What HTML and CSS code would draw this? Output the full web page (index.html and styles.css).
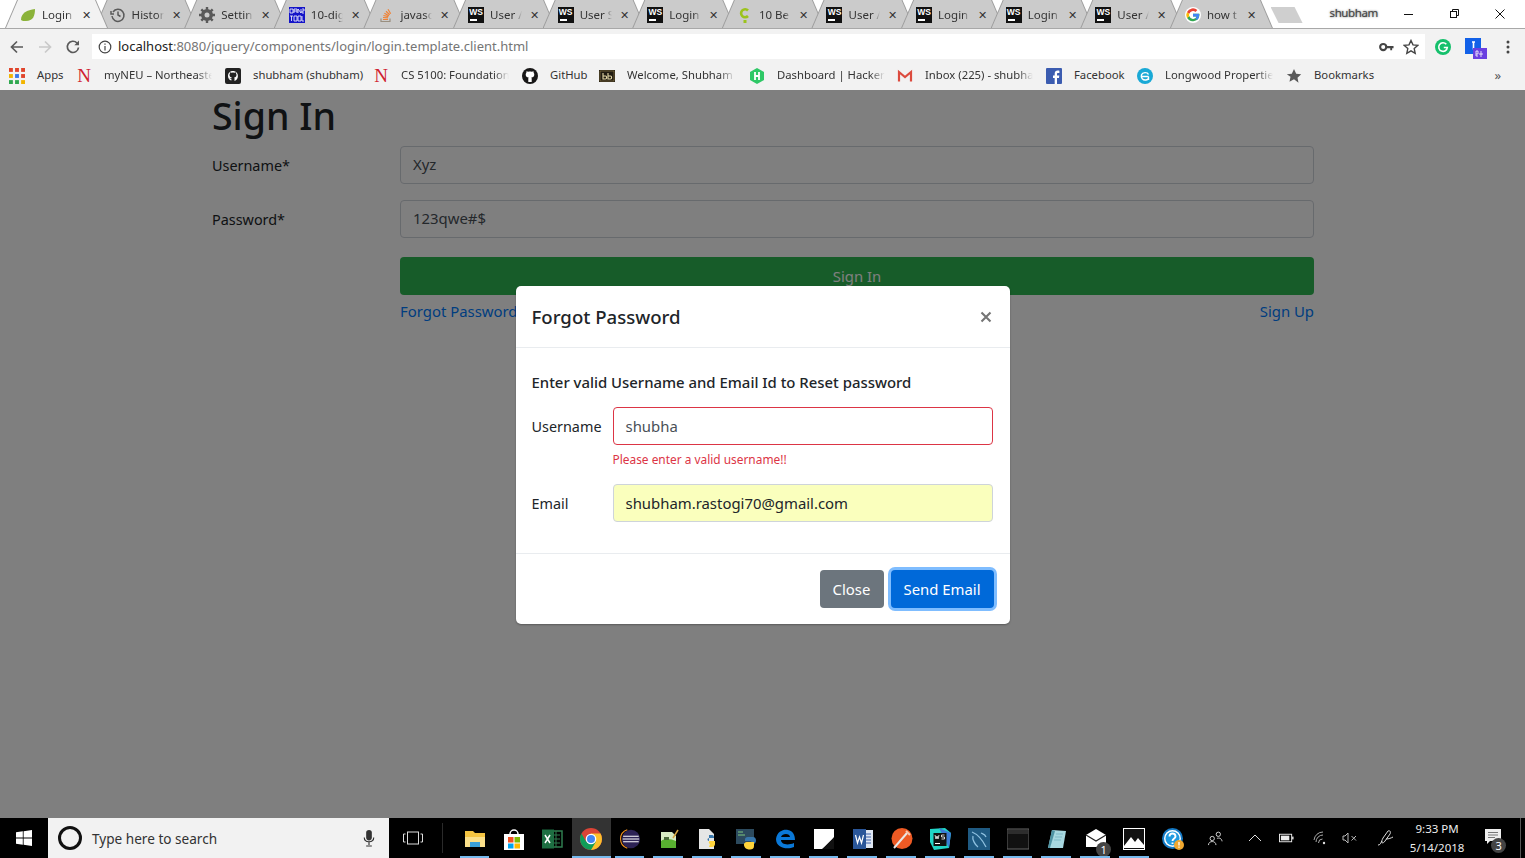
FILE: index.html
```html
<!DOCTYPE html>
<html lang="en">
  <head>
    <meta charset="UTF-8" />
    <title>Login</title>
    <link rel="stylesheet" href="styles.css">
  </head>
  <body>
    <header class="browser">
      <div class="tabstrip">
        <div class="tabs">
          <div class="tab active">
            <svg class="ico" viewBox="0 0 16 16"><path d="M1 13C1 6 7 3 15 2c0 7-2 12-9 12-2 0-4 0-5-1z" fill="#8bb33a" /></svg>
            <span class="tab-name">Login</span><span class="tab-x">✕</span>
          </div>
          <div class="tab">
            <svg class="ico" viewBox="0 0 16 16" fill="none" stroke="#5a5a5a" stroke-width="1.5"><path d="M3 5a6 6 0 1 1-1 4" /><path d="M1 4v3h3" /><path d="M8 4.500V8l2.500 1.500" /></svg>
            <span class="tab-name">Histor</span><span class="tab-x">✕</span>
          </div>
          <div class="tab">
            <svg class="ico" viewBox="0 0 16 16"><circle cx="8" cy="8" r="4.500" fill="none" stroke="#5a5a5a" stroke-width="3" /><path d="M8 0v16M0 8h16M2.300 2.300l11.400 11.400M13.700 2.300L2.300 13.700" stroke="#5a5a5a" stroke-width="2.400" /><circle cx="8" cy="8" r="2.500" fill="#cbcbcb" /></svg>
            <span class="tab-name">Settin</span><span class="tab-x">✕</span>
          </div>
          <div class="tab">
            <svg class="ico" viewBox="0 0 16 16"><rect width="16" height="16" fill="#1414c8" /><path d="M1 2h3v4H1zM5 6V2h3v4M5 4h3M9 6V2l3 4V2M13 2h2v2h-2v2h2M1 9h3M2.500 9v5M5 9h3v5H5zM9 9h3v5H9zM13 9v5h2" fill="none" stroke="#fff" stroke-width=".8" /></svg>
            <span class="tab-name">10-dig</span><span class="tab-x">✕</span>
          </div>
          <div class="tab">
            <svg class="ico" viewBox="0 0 16 16"><path d="M3 11.500v3h9v-3" fill="none" stroke="#9a8f80" stroke-width="1.200" /><path d="M5 12.500h5M5 10.500l5 .4M5.400 8.500l5 1.200M6.400 6.300l4.500 2.500M8 4.200l3.700 3.600M10 2.300l2.700 4.400" stroke="#ef8236" stroke-width="1.200" /></svg>
            <span class="tab-name">javasc</span><span class="tab-x">✕</span>
          </div>
          <div class="tab"><span class="ws">WS</span><span class="tab-name">User /</span><span class="tab-x">✕</span></div>
          <div class="tab"><span class="ws">WS</span><span class="tab-name">User S</span><span class="tab-x">✕</span></div>
          <div class="tab"><span class="ws">WS</span><span class="tab-name">Login</span><span class="tab-x">✕</span></div>
          <div class="tab">
            <svg class="ico" viewBox="0 0 16 16"><path d="M11 3.500A4 4 0 1 0 11 9" fill="none" stroke="#9cc31c" stroke-width="2.600" /><rect x="6.500" y="13" width="3" height="3" fill="#9cc31c" /></svg>
            <span class="tab-name">10 Be</span><span class="tab-x">✕</span>
          </div>
          <div class="tab"><span class="ws">WS</span><span class="tab-name">User /</span><span class="tab-x">✕</span></div>
          <div class="tab"><span class="ws">WS</span><span class="tab-name">Login</span><span class="tab-x">✕</span></div>
          <div class="tab"><span class="ws">WS</span><span class="tab-name">Login</span><span class="tab-x">✕</span></div>
          <div class="tab"><span class="ws">WS</span><span class="tab-name">User /</span><span class="tab-x">✕</span></div>
          <div class="tab">
            <svg class="ico" viewBox="0 0 16 16"><circle cx="8" cy="8" r="8" fill="#fff" /><path d="M14.500 6.800H8v2.600h3.700A3.900 3.900 0 0 1 4.300 9L2 10.800A6.700 6.700 0 0 0 14.500 8z" fill="#34a853" /><path d="M4.300 9.300a4 4 0 0 1 0-2.600L2 4.900a6.700 6.700 0 0 0 0 6.200z" fill="#fbbc05" /><path d="M4.300 6.700A3.900 3.900 0 0 1 10.500 5l1.900-1.900A6.700 6.700 0 0 0 2 4.900z" fill="#ea4335" /><path d="M14.500 6.800H8v2.600h3.700a3.400 3.400 0 0 1-1.500 2.100l2 1.600c1.500-1.400 2.300-3.500 1.800-6.300z" fill="#4285f4" /></svg>
            <span class="tab-name">how t</span><span class="tab-x">✕</span>
          </div>
        </div>
        <div class="newtab"></div>
        <span class="profile">shubham</span>
        <div class="winctl">
          <svg viewBox="0 0 12 12" fill="none" stroke="#111"><path d="M1 6.500h9" /></svg>
          <svg viewBox="0 0 12 12" fill="none" stroke="#111"><rect x="1.500" y="3.500" width="6" height="6" /><path d="M3.500 3.500v-2h6v6h-2" /></svg>
          <svg viewBox="0 0 12 12" fill="none" stroke="#111"><path d="M1.500 1.500l9 9M10.500 1.500l-9 9" /></svg>
        </div>
      </div>

      <div class="toolbar">
        <svg class="tool" viewBox="0 0 16 16" fill="none" stroke="#5a5a5a" stroke-width="1.700"><path d="M14 8H2.500M8 2.500L2.500 8 8 13.500" /></svg>
        <svg class="tool" viewBox="0 0 16 16" fill="none" stroke="#c9c9c9" stroke-width="1.700"><path d="M2 8h11.500M8 2.500L13.500 8 8 13.500" /></svg>
        <svg class="tool" viewBox="0 0 16 16" fill="none" stroke="#5a5a5a" stroke-width="1.700"><path d="M13.500 8.500A5.600 5.600 0 1 1 12 4" /><path d="M14 1.500v4.700H9.300z" fill="#5a5a5a" stroke="none" /></svg>
        <div class="omnibox">
          <svg class="info" viewBox="0 0 14 14" fill="none" stroke="#444" stroke-width="1.200"><circle cx="7" cy="7" r="5.800" /><path d="M7 6v4.500M7 3.500v1.300" /></svg>
          <span class="url"><b>localhost</b>:8080/jquery/components/login/login.template.client.html</span>
          <svg class="key" viewBox="0 0 16 10"><circle cx="4.500" cy="5" r="3.300" fill="none" stroke="#444" stroke-width="2.200" /><path d="M7 3.800h8.500v2.600h-1.500v2h-2v-2H7z" fill="#444" /></svg>
          <svg class="star" viewBox="0 0 16 16" fill="none" stroke="#444" stroke-width="1.400"><path d="M8 1.500l2 4.400 4.700.5-3.500 3.200 1 4.700L8 11.900l-4.200 2.400 1-4.700-3.500-3.200L6 5.900z" /></svg>
        </div>
        <div class="ext">
          <svg viewBox="0 0 16 16"><circle cx="8" cy="8" r="8" fill="#15c06c" /><path d="M11.300 5.300A4.300 4.300 0 1 0 12.300 8.500H8.800" fill="none" stroke="#fff" stroke-width="1.600" /></svg>
          <svg class="ext-i" viewBox="0 0 22 21"><rect width="16" height="16" fill="#1261e8" /><path d="M8.500 3.500v8M7 4h3" stroke="#fff" stroke-width="1.600" /><rect x="8" y="10" width="14" height="11" fill="#6a3fe0" /><path d="M11 16h2v-3h-2v5h2M16 13v6M14 16h4" fill="none" stroke="#fff" stroke-width=".8" /></svg>
          <svg class="dots" viewBox="0 0 4 14" fill="#444"><circle cx="2" cy="2" r="1.500" /><circle cx="2" cy="7" r="1.500" /><circle cx="2" cy="12" r="1.500" /></svg>
        </div>
      </div>

      <nav class="bookmarks">
        <a class="bm w-apps">
          <svg class="ico" viewBox="0 0 14 14"><g fill="#e0452c"><rect width="3.400" height="3.400" /><rect x="5.300" width="3.400" height="3.400" /><rect x="10.600" width="3.400" height="3.400" /></g><g fill="#f2b500"><rect y="5.300" width="3.400" height="3.400" /></g><g fill="#3b78e7"><rect x="5.300" y="5.300" width="3.400" height="3.400" /></g><g fill="#e0452c"><rect x="10.600" y="5.300" width="3.400" height="3.400" /></g><g fill="#2fa84f"><rect y="10.600" width="3.400" height="3.400" /><rect x="5.300" y="10.600" width="3.400" height="3.400" /></g><rect x="10.600" y="10.600" width="3.400" height="3.400" fill="#f2b500" /></svg>
          <span class="bm-name">Apps</span>
        </a>
        <a class="bm w-cut"><span class="neu">N</span><span class="bm-name">myNEU – Northeaste</span></a>
        <a class="bm w-shub">
          <svg class="ico" viewBox="0 0 16 16"><rect width="16" height="16" rx="2" fill="#222" /><path d="M8 3C5.200 3 3 5.100 3 7.900c0 2.200 1.400 4 3.400 4.700v-1.700c-1 .2-1.600-.3-1.900-1.100.7.300 1.300.8 2 .5.100-.4.200-.6.400-.8-1.500-.2-2.400-1-2.400-2.600 0-.6.200-1 .5-1.400 0-.4 0-.9.100-1.300.6 0 1 .3 1.500.6a5 5 0 0 1 2.800 0c.5-.3.900-.6 1.500-.6.100.4.100.9.100 1.300.3.400.5.800.5 1.400 0 1.600-.9 2.400-2.400 2.600.3.300.4.700.4 1.300v2.100c2-.7 3.400-2.500 3.400-4.700C13 5.100 10.800 3 8 3z" fill="#fff" /></svg>
          <span class="bm-name">shubham (shubham)</span>
        </a>
        <a class="bm w-cut"><span class="neu">N</span><span class="bm-name">CS 5100: Foundation</span></a>
        <a class="bm w-git">
          <svg class="ico" viewBox="0 0 16 16"><circle cx="8" cy="8" r="8" fill="#181717" /><path d="M8 3.500c-.7 0-1.300.1-1.800.3-.6-.4-1.100-.6-1.700-.6-.2.5-.2 1-.1 1.500C4 5.100 3.700 5.700 3.700 6.400c0 2 1.100 2.900 3 3.100-.3.300-.4.700-.4 1.200V14h3.400v-3.300c0-.5-.1-.9-.4-1.200 1.900-.2 3-1.100 3-3.100 0-.7-.3-1.300-.7-1.700.1-.5.100-1-.1-1.500-.6 0-1.100.2-1.700.6-.5-.2-1.100-.3-1.800-.3z" fill="#fff" /></svg>
          <span class="bm-name">GitHub</span>
        </a>
        <a class="bm w-cut">
          <svg class="ico" viewBox="0 0 16 16"><rect y="2" width="16" height="12" fill="#211c12" /><rect x="1" y="3" width="14" height="10" fill="none" stroke="#a08a50" stroke-width=".6" /><path d="M4 5v6h2.500c1.500 0 1.500-3 0-3H4M9 5v6h2.500c1.500 0 1.500-3 0-3H9" fill="none" stroke="#e6d9a8" stroke-width="1.100" /></svg>
          <span class="bm-name">Welcome, Shubham</span>
        </a>
        <a class="bm w-cut gap-wide">
          <svg class="ico" viewBox="0 0 16 16"><path d="M8 0l7 4v8l-7 4-7-4V4z" fill="#2ec866" /><path d="M6 4v8M10 4v8M6 8h4" stroke="#fff" stroke-width="1.800" /></svg>
          <span class="bm-name">Dashboard | HackerR</span>
        </a>
        <a class="bm w-cut gap-tight">
          <svg class="ico" viewBox="0 0 16 16" fill="none" stroke="#dc4b3e" stroke-width="2.200"><path d="M2 13.500V4l6 5 6-5v9.500" /></svg>
          <span class="bm-name">Inbox (225) - shubha</span>
        </a>
        <a class="bm w-fb">
          <svg class="ico" viewBox="0 0 16 16"><rect width="16" height="16" rx="1" fill="#3b5cb0" /><path d="M11 16V10h2l.3-2.400H11V6c0-.7.200-1.100 1.200-1.100h1.200V2.700c-.5 0-1.100-.1-1.700-.1-1.800 0-3 1-3 3v2H7V10h1.700v6z" fill="#fff" /></svg>
          <span class="bm-name">Facebook</span>
        </a>
        <a class="bm w-cut">
          <svg class="ico" viewBox="0 0 16 16"><circle cx="8" cy="8" r="8" fill="#19a9d6" /><path d="M4 8.500h7.500M11.500 8.500V12M11.500 6.500C10.500 4 5.500 4 4.500 6.800 3.500 10 6 12.500 9 12c1.200-.2 2-.8 2.500-1.500" fill="none" stroke="#fff" stroke-width="1.400" /></svg>
          <span class="bm-name">Longwood Propertie</span>
        </a>
        <a class="bm w-book">
          <svg class="ico" viewBox="0 0 16 16"><path d="M8 1l2.200 4.700 5 .6-3.700 3.400 1 5L8 11.300l-4.500 2.500 1-5L.8 6.300l5-.6z" fill="#5a5a5a" /></svg>
          <span class="bm-name">Bookmarks</span>
        </a>
        <span class="more">»</span>
      </nav>
    </header>

    <main class="page">
      <section class="signin">
        <h1>Sign In</h1>
        <div class="row">
          <label>Username*</label>
          <div class="input">Xyz</div>
        </div>
        <div class="row">
          <label>Password*</label>
          <div class="input">123qwe#$</div>
        </div>
        <div class="row">
          <span></span>
          <div>
            <button class="btn btn-signin" type="button">Sign In</button>
            <div class="links">
              <a>Forgot Password</a>
              <a>Sign Up</a>
            </div>
          </div>
        </div>
      </section>

      <div class="backdrop">
        <div class="modal">
          <div class="modal-head">
            <h5>Forgot Password</h5>
            <svg class="close" viewBox="0 0 12 12" fill="none" stroke="#757575" stroke-width="2.100"><path d="M1.500 1.500l9 9M10.500 1.500l-9 9" /></svg>
          </div>
          <div class="modal-body">
            <p>Enter valid Username and Email Id to Reset password</p>
            <div class="m-row">
              <label>Username</label>
              <div>
                <div class="input invalid">shubha</div>
                <small>Please enter a valid username!!</small>
              </div>
            </div>
            <div class="m-row">
              <label>Email</label>
              <div class="input autofill">shubham.rastogi70@gmail.com</div>
            </div>
          </div>
          <div class="modal-foot">
            <button class="btn btn-close" type="button">Close</button>
            <button class="btn btn-send" type="button">Send Email</button>
          </div>
        </div>
      </div>
    </main>

    <footer class="taskbar">
      <svg class="start" viewBox="0 0 16 16" fill="#fff"><path d="M0 2.300l6.800-1v6.300H0zM7.600 1.200L16 0v7.600H7.600zM0 8.400h6.800v6.300l-6.800-1zM7.600 8.400H16V16l-8.400-1.200z" /></svg>
      <div class="search">
        <svg class="cortana" viewBox="0 0 26 26" fill="none"><circle cx="13" cy="13" r="10.500" stroke="#111" stroke-width="3" /></svg>
        <span>Type here to search</span>
        <svg class="mic" viewBox="0 0 12 18"><rect x="3" y="0" width="6" height="11" rx="3" fill="#333" /><path d="M1 8c0 6 10 6 10 0M6 13v3M3 17h6" fill="none" stroke="#333" stroke-width="1.200" /></svg>
      </div>
      <svg class="taskview" viewBox="0 0 20 14" fill="none" stroke="#ddd"><rect x="4.500" y="1" width="11" height="12" /><path d="M2.500 3H.5v8h2M17.500 3h2v8h-2" /></svg>
      <span class="sep"></span>

      <div class="apps">
        <span class="app on"><svg viewBox="0 0 22 22"><path d="M1 3h8l2 2h10v14H1z" fill="#f5c542" /><rect x="1" y="9" width="20" height="10" fill="#fbe08a" /><rect x="6" y="14" width="10" height="5" fill="#3aa0d8" /></svg></span>
        <span class="app"><svg viewBox="0 0 22 22"><path d="M7 6a4 4 0 0 1 8 0" fill="none" stroke="#fff" stroke-width="1.500" /><rect x="1" y="6" width="20" height="16" fill="#fff" /><rect x="5" y="9" width="5.500" height="5.500" fill="#f25022" /><rect x="11.500" y="9" width="5.500" height="5.500" fill="#7fba00" /><rect x="5" y="15.500" width="5.500" height="5" fill="#00a4ef" /><rect x="11.500" y="15.500" width="5.500" height="5" fill="#ffb900" /></svg></span>
        <span class="app"><svg viewBox="0 0 22 22"><rect x="9" y="3" width="12" height="16" fill="none" stroke="#2f7d4f" stroke-width="1.500" /><path d="M12 7h7M12 11h7M12 15h7M15 3v16" stroke="#2f7d4f" /><rect x="1" y="1.500" width="12" height="19" fill="#1d6f42" /><path d="M4 7l5 8M9 7l-5 8" stroke="#fff" stroke-width="1.500" /></svg></span>
        <span class="app on active"><svg viewBox="0 0 22 22"><circle cx="11" cy="11" r="11" fill="#db4437" /><path d="M11 22a11 11 0 0 0 9.500-16.500H11z" fill="#fbc02d" /><path d="M1.500 5.500A11 11 0 0 0 11 22l5-8.500H6z" fill="#0f9d58" /><circle cx="11" cy="11" r="5.300" fill="#fff" /><circle cx="11" cy="11" r="4" fill="#4285f4" /></svg></span>
        <span class="app on"><svg viewBox="0 0 24 24"><circle cx="13" cy="12" r="10" fill="#2c2255" /><path d="M4 12h18M4.500 9h17M4.500 15h17" stroke="#fff" stroke-width="1.300" /><path d="M9 2a10.500 10.500 0 0 0 0 20" fill="none" stroke="#f7941e" stroke-width="1.200" /></svg></span>
        <span class="app on"><svg viewBox="0 0 22 22"><path d="M3 4h11l4 4v12H3z" fill="#d9ecc4" /><path d="M3 13c4-3 10-2 15 0v7H3z" fill="#58b030" /><path d="M6 9h5v3H6z" fill="#4b6b3a" /><path d="M15 10L20 2" stroke="#d7a640" stroke-width="1.500" /></svg></span>
        <span class="app on"><svg viewBox="0 0 22 22"><path d="M2 1h10l5 5v15H2z" fill="#e6e6e6" /><path d="M12 7h3c2 0 2 2 2 3h-5c-2 0-2 3 0 3" fill="#3776ab" /><path d="M12 19h3c2 0 3-2 3-3v-3h-5c-2 0-1 3 0 3z" fill="#ffd43b" /></svg></span>
        <span class="app on"><svg viewBox="0 0 22 22"><rect x="1" y="1" width="18" height="15" fill="#2c4a5e" /><path d="M3 4h5M3 7h7" stroke="#7fc77f" /><path d="M14 9c-4 0-4 1-4 4h5c2 0 2 2 0 2h-1c-4 0-4 2-4 3 0 3 8 3 8 0v-2c4 0 4-7 0-7z" fill="#3776ab" /><path d="M10 15c-2 0-1 5 2 6 3 1 7 1 7-3v-4h-6c-2 0-3 0-3 1z" fill="#ffd43b" /></svg></span>
        <span class="app on"><svg viewBox="0 0 22 22"><path d="M2 11C3 3 10 1 14 2c5 1 7 5 7 10H7c0 4 6 6 13 3v4c-7 3-18 1-18-8zM7 9h9c0-4-8-4-9 0z" fill="#0a78d7" /></svg></span>
        <span class="app on"><svg viewBox="0 0 22 22"><rect width="20" height="20" x="1" y="1" fill="#fff" /><path d="M21 9v12H9z" fill="#111" /><path d="M9 21l6-8 6-4" fill="#fff" /></svg></span>
        <span class="app on"><svg viewBox="0 0 22 22"><rect x="7" y="2" width="14" height="18" fill="#dfe7f3" /><path d="M12 6h7M12 9h7M12 12h7M12 15h7" stroke="#3a5fa8" /><rect x="1" y="1" width="13" height="20" fill="#2a5699" /><path d="M3.500 7l2 8 2-6 2 6 2-8" fill="none" stroke="#fff" stroke-width="1.200" /></svg></span>
        <span class="app on"><svg viewBox="0 0 22 22"><circle cx="11" cy="10.500" r="10.500" fill="#ee5a24" /><path d="M3 20L16 5" stroke="#e8e8e8" stroke-width="2" /><path d="M15 3l4 4" stroke="#f7c8b0" stroke-width="2" /></svg></span>
        <span class="app on"><svg viewBox="0 0 22 22"><path d="M1 1l15-1 6 5-2 15-15 2-4-8z" fill="#21d4c6" /><path d="M10 0l12 5-2 15z" fill="#3a7bd5" /><rect x="4.500" y="5" width="13" height="13" fill="#111" /><path d="M6 7l1 4 1-3 1 3 1-4M15.500 7h-3v2h3v2h-3" fill="none" stroke="#fff" stroke-width=".8" /><rect x="6" y="15" width="5" height="1" fill="#fff" /></svg></span>
        <span class="app on"><svg viewBox="0 0 22 22"><rect width="22" height="22" fill="#1f5a82" /><path d="M4 4c5 2 10 7 14 15M13 5c2 1 4 1 5 4M5 8c-1 3 2 9 5 11" fill="none" stroke="#8fc1e0" stroke-width="1.300" /></svg></span>
        <span class="app on"><svg viewBox="0 0 22 22"><rect x="0" y="1" width="22" height="20" fill="#111" stroke="#666" /><rect x="1" y="2" width="20" height="4" fill="#2d2d2d" /></svg></span>
        <span class="app on"><svg viewBox="0 0 22 22"><path d="M6 2l14 1-3 17H2z" fill="#a8d8e0" /><path d="M6 2l3 1-5 17H2z" fill="#4f93a3" /><path d="M10 6h7M9 9h7M8 12h7" stroke="#7fb9c6" /></svg></span>
        <span class="app on has-badge"><svg viewBox="0 0 22 22"><path d="M1 7l10-6 10 6v12H1z" fill="#fff" /><path d="M1 7l10 6 10-6" fill="none" stroke="#222" stroke-width="1.200" /></svg><i class="count">1</i></span>
        <span class="app on"><svg viewBox="0 0 22 22"><rect width="21" height="21" x=".5" y=".5" fill="#111" stroke="#fff" /><path d="M1 18l7-9 4 5 3-4 6 7v3H1z" fill="#fff" /></svg></span>
        <span class="app"><svg viewBox="0 0 22 22"><circle cx="10.500" cy="10.500" r="10.500" fill="#1479c4" /><circle cx="10.500" cy="10.500" r="8.500" fill="#fff" /><circle cx="10.500" cy="10.500" r="7" fill="#1f9ae0" /><path d="M7.500 8.500c0-4 6-4 6 0 0 2-3 2-3 4.500M10.500 14.500v1.500" fill="none" stroke="#fff" stroke-width="1.900" /><circle cx="17" cy="17" r="5" fill="#f0a830" /><path d="M17 14v3.500M17 18.500v1.200" stroke="#fff" stroke-width="1.300" /></svg></span>
      </div>

      <div class="tray">
        <svg class="t-people" viewBox="0 0 16 16" fill="none" stroke="#ddd"><circle cx="4.500" cy="8" r="2.300" /><path d="M.5 15c0-5 8-5 8 0" /><circle cx="11" cy="3.500" r="2.300" /><path d="M9.500 8c2-1 5-.500 5.500 3" /></svg>
        <svg class="t-chev" viewBox="0 0 14 8" fill="none" stroke="#ddd"><path d="M1 7l6-6 6 6" /></svg>
        <svg class="t-batt" viewBox="0 0 16 10"><rect x=".5" y="1" width="13" height="8" fill="none" stroke="#eee" /><rect x="2" y="2.500" width="9" height="5" fill="#eee" /><rect x="14" y="3.500" width="1.500" height="3" fill="#eee" /></svg>
        <svg class="t-wifi" viewBox="0 0 14 14" fill="none" stroke="#aaa"><path d="M1 9a9 9 0 0 1 9-8M3 11a7 7 0 0 1 7-7M5.500 12a4 4 0 0 1 4-4" /><circle cx="11" cy="12" r="1.200" fill="#ddd" stroke="none" /></svg>
        <svg class="t-vol" viewBox="0 0 16 14" fill="none" stroke="#bbb"><path d="M1 5h2l3-3v10L3 9H1zM9.500 5l4.500 4.500M14 5l-4.500 4.500" /></svg>
        <svg class="t-pen" viewBox="0 0 18 18" fill="none" stroke="#ddd"><path d="M1 16c3 0 3-3 5-7l5-7c2-1 3 1 2 3L8 12c-1 2-4 3-3 0M9 10c3 0 5-1 7-2" /></svg>
        <div class="clock"><span>9:33 PM</span><span>5/14/2018</span></div>
        <span class="notif">
          <svg viewBox="0 0 16 16"><path d="M0 0h16v12H5l-3 3v-3H0z" fill="#eee" /><path d="M3 3.500h10M3 6h10M3 8.500h7" stroke="#777" /></svg>
          <i class="count">3</i>
        </span>
        <span class="desktop"></span>
      </div>
    </footer>
  </body>
</html>
```

FILE: styles.css
```css
* {
  margin: 0;
  padding: 0;
  box-sizing: border-box;
}
html,
body {
  height: 858px;
  overflow: hidden;
}
body {
  display: flex;
  flex-direction: column;
  color: #212529;
  font: 400 16px/1.5 "Noto Sans", "Open Sans", sans-serif;
  background: #fff;
}
.ico {
  width: 16px;
  height: 16px;
  flex: none;
}
.ws {
  position: relative;
  flex: none;
  width: 16px;
  height: 16px;
  padding-top: 1px;
  font: 700 8.5px/9px "Liberation Sans", sans-serif;
  text-align: center;
  color: #fff;
  background: #111;
}
.ws::after {
  content: "";
  position: absolute;
  left: 2px;
  bottom: 2px;
  width: 7px;
  height: 2px;
  background: #fff;
}
.neu {
  flex: none;
  width: 16px;
  height: 16px;
  font: 400 19px/16px "Liberation Serif", serif;
  text-align: center;
  color: #d0212f;
}

/* Tab strip */
.tabstrip {
  height: 29px;
  display: flex;
  align-items: flex-start;
  border-bottom: 1px solid #a8a8a8;
  background: #fff;
  padding-left: 5px;
}
.tabs {
  display: flex;
}
.tab {
  position: relative;
  width: 103px;
  height: 28px;
  margin-right: -13.4px;
  padding: 7px 15px 0;
  display: flex;
  gap: 6px;
  font-size: 11.5px;
  line-height: 16px;
  color: #333;
  background: #9d9d9d;
  clip-path: polygon(0 100%, 12px 0, 91px 0, 100% 100%);
}
.tab::before {
  content: "";
  position: absolute;
  z-index: -1;
  inset: 0 1px;
  background: #cbcbcb;
  clip-path: polygon(0 100%, 12px 0, 89px 0, 100% 100%);
}
.tab.active {
  z-index: 2;
}
.tab.active::before {
  background: #f2f2f2;
}
.tab-name {
  width: 32px;
  white-space: nowrap;
  -webkit-mask-image: linear-gradient(90deg, #000 78%, transparent);
  mask-image: linear-gradient(90deg, #000 78%, transparent);
}
.tab-x {
  margin-left: 2px;
  font-size: 11px;
  color: #333;
}
.newtab {
  width: 32px;
  height: 16px;
  margin: 7px 0 0 11px;
  background: #cfcfcf;
  clip-path: polygon(0 0, 24px 0, 100% 100%, 8px 100%);
}
.profile {
  margin: 5px 0 0 27px;
  font-size: 11.5px;
  line-height: 16px;
  letter-spacing: -0.4px;
  color: #444;
  text-shadow: 0 0 2px #555;
}
.winctl {
  margin-left: auto;
  width: 140px;
  padding: 8px 19px 0 18px;
  display: flex;
  justify-content: space-between;
}
.winctl svg {
  width: 12px;
  height: 12px;
}

/* Toolbar */
.toolbar {
  height: 31px;
  padding: 5px 0 1px 9px;
  display: flex;
  align-items: center;
  background: #f2f2f2;
}
.tool {
  width: 16px;
  height: 16px;
  margin-right: 12px;
}
.omnibox {
  flex: none;
  width: 1333px;
  height: 25px;
  margin-left: -1px;
  padding: 0 6px;
  display: flex;
  align-items: center;
  background: #fff;
}
.info {
  width: 14px;
  height: 14px;
}
.url {
  margin: 1px 0 0 6px;
  font-size: 13px;
  color: #757575;
  white-space: nowrap;
}
.url b {
  font-weight: 400;
  color: #222;
}
.key {
  width: 15px;
  height: 10px;
  margin-left: auto;
}
.star {
  width: 16px;
  height: 16px;
  margin-left: 9px;
}
.ext {
  flex: 1;
  display: flex;
  align-items: center;
}
.ext svg {
  width: 16px;
  height: 16px;
  margin-left: 10px;
}
.ext .ext-i {
  width: 22px;
  height: 21px;
  margin: 4px 0 0 14px;
}
.ext .dots {
  width: 4px;
  height: 14px;
  margin-left: 19px;
}

/* Bookmarks */
.bookmarks {
  height: 30px;
  padding: 1px 0 0 9px;
  display: flex;
  align-items: center;
  gap: 13px;
  font-size: 11.3px;
  color: #333;
  background: #f2f2f2;
}
.bm {
  display: flex;
  align-items: center;
  gap: 12px;
}
.bm-name {
  display: block;
  white-space: nowrap;
}
.w-apps .bm-name {
  width: 26px;
}
.w-shub .bm-name {
  width: 107px;
}
.w-git .bm-name {
  width: 36px;
}
.w-fb .bm-name {
  width: 50px;
}
.w-book .bm-name {
  width: 58px;
}
.w-cut .bm-name {
  width: 108px;
  -webkit-mask-image: linear-gradient(90deg, #000 86%, transparent);
  mask-image: linear-gradient(90deg, #000 86%, transparent);
}
.gap-wide {
  margin-left: 1px;
}
.gap-tight {
  margin-left: -1px;
}
.more {
  margin-left: auto;
  margin-right: 24px;
  font-size: 13px;
  color: #555;
}

/* Page behind the modal */
.page {
  position: relative;
  flex: 1;
  background: #fff;
}
.signin {
  width: 1102px;
  margin-left: 212px;
}
.signin h1 {
  height: 56px;
  font-size: 37.5px;
  font-weight: 500;
  line-height: 52px;
}
.row {
  display: grid;
  grid-template-columns: 188px 914px;
  margin-bottom: 16px;
}
.row label {
  height: 38px;
  line-height: 40px;
  font-size: 14.4px;
}
.input {
  height: 38px;
  padding: 0 12px;
  font-size: 14.9px;
  line-height: 35px;
  color: #495057;
  background: #fff;
  border: 1px solid #ced4da;
  border-radius: 4px;
}
.row + .row + .row {
  margin-top: 19px;
}
.btn {
  height: 38px;
  border: none;
  border-radius: 4px;
  font: inherit;
  font-size: 14.9px;
  color: #fff;
}
.btn-signin {
  width: 100%;
  background: #2eb852;
}
.links {
  margin-top: 5px;
  display: flex;
  justify-content: space-between;
  font-size: 14.9px;
  color: #007bff;
}

/* Modal */
.backdrop {
  position: absolute;
  inset: 0;
  padding-top: 196px;
  display: flex;
  justify-content: center;
  background: rgba(0, 0, 0, 0.5);
}
.modal {
  width: 494px;
  height: 338px;
  background: #fff;
  border-radius: 5px;
  box-shadow: 0 1px 2px rgba(0, 0, 0, 0.3);
}
.modal-head {
  height: 62px;
  padding: 0 16px;
  display: flex;
  align-items: center;
  justify-content: space-between;
  border-bottom: 1px solid #e9ecef;
}
.modal-head h5 {
  font-size: 18.6px;
  font-weight: 500;
}
.close {
  width: 12px;
  height: 12px;
  margin: 0 2px 0 0;
}
.modal-body {
  height: 205px;
  padding: 22px 16px 0;
  font-size: 14.9px;
}
.modal-body p {
  font-weight: 500;
  line-height: 24px;
  margin-bottom: 13px;
}
.m-row {
  display: grid;
  grid-template-columns: 81px 380px;
}
.m-row label {
  font-size: 14.4px;
  line-height: 39px;
}
.m-row .input {
  line-height: 37px;
}
.m-row small {
  display: block;
  height: 39px;
  padding-top: 5px;
  font-size: 11.9px;
  line-height: 18px;
  color: #dc3545;
}
.invalid {
  border-color: #dc3545;
}
.autofill {
  color: #212529;
  background: #faffbd;
}
.modal-foot {
  height: 71px;
  padding: 16px 16px 0;
  display: flex;
  justify-content: flex-end;
  gap: 8px;
  border-top: 1px solid #e9ecef;
}
.btn-close {
  width: 64px;
  margin-right: -1px;
  background: #6c757d;
}
.btn-send {
  width: 103px;
  background: #0069d9;
  box-shadow: 0 0 0 3px rgba(0, 123, 255, 0.5);
}

/* Windows taskbar */
.taskbar {
  height: 40px;
  display: flex;
  align-items: center;
  color: #eee;
  background: #000;
}
.start {
  flex: none;
  width: 16px;
  height: 16px;
  margin: 0 16px;
}
.search {
  flex: none;
  width: 341px;
  height: 40px;
  padding: 0 14px 0 9px;
  display: flex;
  align-items: center;
  font-size: 13.6px;
  color: #333;
  background: #f2f2f2;
}
.search span {
  padding-top: 2px;
}
.cortana {
  width: 26px;
  height: 26px;
  margin-right: 9px;
}
.mic {
  width: 12px;
  height: 17px;
  margin-left: auto;
}
.taskview {
  flex: none;
  width: 20px;
  height: 14px;
  margin-left: 14px;
}
.sep {
  width: 1px;
  height: 30px;
  margin: 0 12.5px 0 19px;
  background: #2a2a2a;
}
.apps {
  display: flex;
}
.app {
  position: relative;
  width: 38.8px;
  height: 40px;
  display: flex;
  align-items: center;
  justify-content: center;
  padding-top: 1px;
}
.app svg {
  width: 22px;
  height: 22px;
}
.app.on::after {
  content: "";
  position: absolute;
  left: 4px;
  right: 5px;
  bottom: 0;
  height: 2px;
  background: #76b9ed;
}
.app.active {
  background: #333;
}
.app.active::after {
  left: 0;
  right: 0;
}
.count {
  position: absolute;
  right: 4px;
  bottom: 1px;
  width: 15px;
  height: 15px;
  font-size: 11px;
  font-style: normal;
  line-height: 15px;
  text-align: center;
  color: #fff;
  background: #444;
  border-radius: 50%;
}
.tray {
  flex: 1;
  height: 40px;
  padding-left: 15.5px;
  display: flex;
  align-items: center;
  font-size: 11.5px;
}
.t-people {
  width: 15px;
  height: 15px;
}
.t-chev {
  width: 14px;
  height: 8px;
  margin-left: 25px;
}
.t-batt {
  width: 15px;
  height: 10px;
  margin-left: 17px;
}
.t-wifi {
  width: 14px;
  height: 14px;
  margin-left: 19px;
}
.t-vol {
  width: 16px;
  height: 14px;
  margin-left: 15px;
}
.t-pen {
  width: 18px;
  height: 18px;
  margin-left: 19px;
}
.clock {
  width: 66px;
  margin-left: 9px;
  display: flex;
  flex-direction: column;
  align-items: center;
  line-height: 19px;
}
.notif {
  position: relative;
  width: 24px;
  height: 24px;
  margin-left: 15px;
}
.notif svg {
  width: 16px;
  height: 16px;
  margin-top: 3px;
}
.notif .count {
  right: 3px;
  bottom: -3px;
}
.desktop {
  width: 1px;
  height: 40px;
  margin-left: 11px;
  background: #555;
}
```
